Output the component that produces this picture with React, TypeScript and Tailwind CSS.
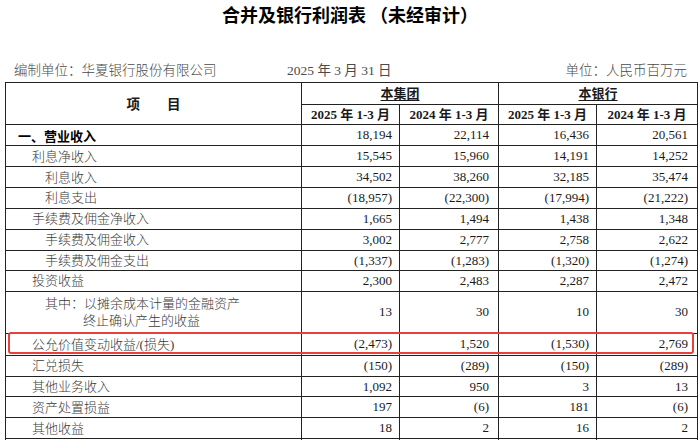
const serif = "font-['Liberation_Serif','Noto_Sans_CJK_SC',serif]"

type Row = {
  label: string
  label2?: string
  level: 0 | 1 | 2
  bold?: boolean
  h: string
  v: string[]
}

const rows: Row[] = [
  { label: "一、营业收入", level: 0, bold: true, h: "h-[21px]", v: ["18,194", "22,114", "16,436", "20,561"] },
  { label: "利息净收入", level: 1, h: "h-[21px]", v: ["15,545", "15,960", "14,191", "14,252"] },
  { label: "利息收入", level: 2, h: "h-[21px]", v: ["34,502", "38,260", "32,185", "35,474"] },
  { label: "利息支出", level: 2, h: "h-[20px]", v: ["(18,957)", "(22,300)", "(17,994)", "(21,222)"] },
  { label: "手续费及佣金净收入", level: 1, h: "h-[21px]", v: ["1,665", "1,494", "1,438", "1,348"] },
  { label: "手续费及佣金收入", level: 2, h: "h-[21px]", v: ["3,002", "2,777", "2,758", "2,622"] },
  { label: "手续费及佣金支出", level: 2, h: "h-[20px]", v: ["(1,337)", "(1,283)", "(1,320)", "(1,274)"] },
  { label: "投资收益", level: 1, h: "h-[20px]", v: ["2,300", "2,483", "2,287", "2,472"] },
  {
    label: "其中：以摊余成本计量的金融资产",
    label2: "终止确认产生的收益",
    level: 2,
    h: "h-[42px]",
    v: ["13", "30", "10", "30"],
  },
  { label: "公允价值变动收益/(损失)", level: 1, h: "h-[22px]", v: ["(2,473)", "1,520", "(1,530)", "2,769"] },
  { label: "汇兑损失", level: 1, h: "h-[21px]", v: ["(150)", "(289)", "(150)", "(289)"] },
  { label: "其他业务收入", level: 1, h: "h-[20px]", v: ["1,092", "950", "3", "13"] },
  { label: "资产处置损益", level: 1, h: "h-[21px]", v: ["197", "(6)", "181", "(6)"] },
  { label: "其他收益", level: 1, h: "h-[21px]", v: ["18", "2", "16", "2"] },
]

const indent = ["pl-[12px]", "pl-[26px]", "pl-[39px]"]

export default function App() {
  return (
    <div className={`relative w-[700px] h-[440px] overflow-hidden bg-white text-[#1a1a1a] ${serif}`}>
      <div className="h-[28px] flex items-center justify-center text-[18px] font-bold text-black font-['Noto_Sans_CJK_SC',sans-serif]">
        {"合并及银行利润表 （未经审计）"}
      </div>

      <div className="mt-[33px] h-[20px] flex items-center text-[13.5px] text-[#4a4a4a]">
        <span className="pl-[14px] w-[287px] font-light">{"编制单位：华夏银行股份有限公司"}</span>
        <span>{"2025 年 3 月 31 日"}</span>
        <span className="ml-auto pr-[13px] font-light">{"单位：人民币百万元"}</span>
      </div>

      <table className="mt-[1px] ml-[5px] w-[692px] table-fixed border-collapse border border-[#222] text-[13px]">
        <colgroup>
          <col className="w-[296px]" />
          <col className="w-[98px]" />
          <col className="w-[99px]" />
          <col className="w-[98px]" />
          <col className="w-[101px]" />
        </colgroup>
        <thead>
          <tr className="h-[21px]">
            <th rowSpan={2} className="border border-[#222] text-center font-bold text-[13.5px] font-['Noto_Sans_CJK_SC',sans-serif]">
              {"项　　目"}
            </th>
            <th colSpan={2} className="border border-[#222] text-center font-bold p-0">
              <span className="underline underline-offset-2 font-['Noto_Sans_CJK_SC',sans-serif]">{"本集团"}</span>
            </th>
            <th colSpan={2} className="border border-[#222] text-center font-bold p-0">
              <span className="underline underline-offset-2 font-['Noto_Sans_CJK_SC',sans-serif]">{"本银行"}</span>
            </th>
          </tr>
          <tr className="h-[20px]">
            {[0, 1, 2, 3].map((i) => (
              <th key={i} className="border border-[#222] text-center font-bold p-0 whitespace-nowrap">
                {i % 2 === 0 ? "2025 年 1-3 月" : "2024 年 1-3 月"}
              </th>
            ))}
          </tr>
        </thead>
        <tbody>
          {rows.map((r) => (
            <tr key={r.label} className={r.h}>
              <td className={`border border-[#222] p-0 ${indent[r.level]} text-[#3a3a3a] leading-[17px] whitespace-nowrap`}>
                <div className={r.bold ? "font-bold text-black font-['Noto_Sans_CJK_SC',sans-serif]" : "font-light"}>{r.label}</div>
                {r.label2 && <div className="pl-[38px] font-light">{r.label2}</div>}
              </td>
              {r.v.map((n, i) => (
                <td
                  key={i}
                  className={`border border-[#222] p-0 text-right ${i % 2 === 0 ? "pr-[7px]" : "pr-[9px]"} whitespace-nowrap`}
                >
                  {n}
                </td>
              ))}
            </tr>
          ))}
          <tr className="h-[21px]">
            <td className="border border-[#222]" />
            <td className="border border-[#222]" />
            <td className="border border-[#222]" />
            <td className="border border-[#222]" />
            <td className="border border-[#222]" />
          </tr>
        </tbody>
      </table>

      <div className="absolute left-[8px] top-[332px] w-[686px] h-[22px] border-2 border-[#e8403a] rounded-[3px]" />
    </div>
  )
}
